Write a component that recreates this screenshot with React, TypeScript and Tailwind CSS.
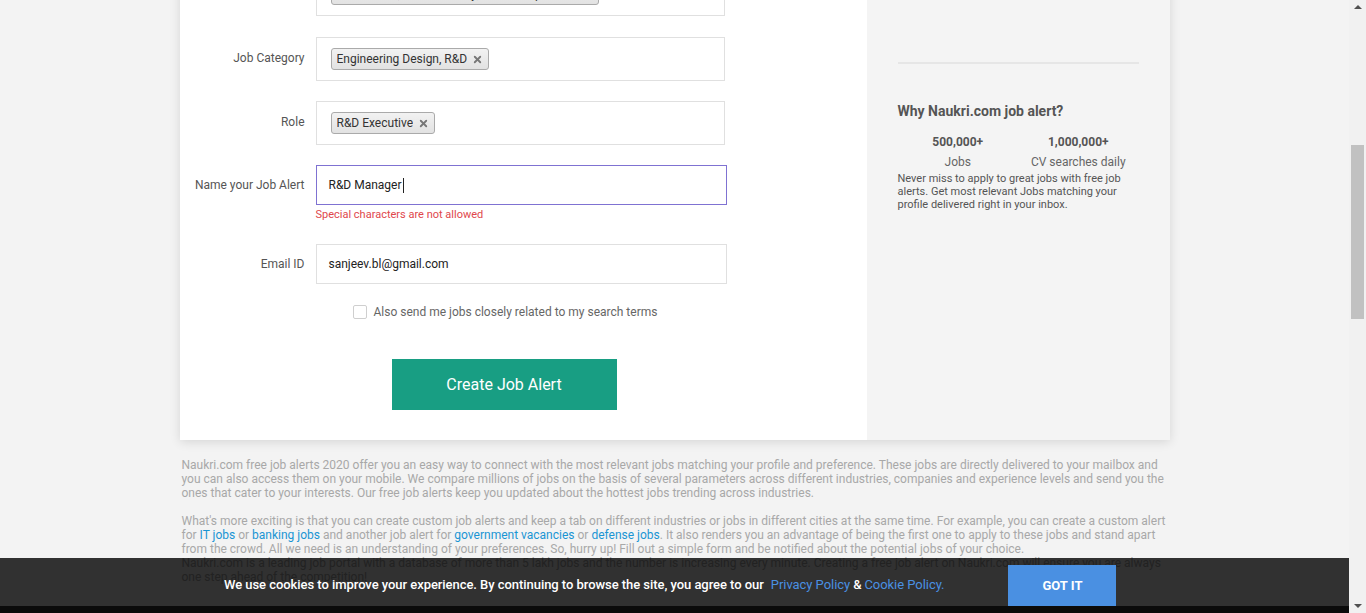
import { X } from 'lucide-react';

function Tag({ label, className = '' }: { label: string; className?: string }) {
  return (
    <span
      className={`inline-flex items-center h-[22px] px-[5px] gap-[5px] rounded-[3px] border border-[#aaaaaa] bg-gradient-to-b from-[#f2f2f2] to-[#e2e2e2] text-[12px] text-[#333] whitespace-nowrap overflow-hidden ${className}`}
    >
      <span className="truncate">{label}</span>
      <X size={11} strokeWidth={4} className="text-[#777] shrink-0" />
    </span>
  );
}

function Row({
  label,
  children,
  className = '',
  labelClass = '',
}: {
  label: string;
  children: React.ReactNode;
  className?: string;
  labelClass?: string;
}) {
  return (
    <div className={`flex items-center ${className}`}>
      <div className={`w-[136px] pr-[11px] text-right text-[12px] text-[#555] shrink-0 ${labelClass}`}>{label}</div>
      {children}
    </div>
  );
}

export default function App() {
  return (
    <div className="h-screen w-full flex overflow-hidden bg-[#f3f3f3] font-['Roboto',sans-serif]">
      <div className="flex-1 relative overflow-hidden">
        <div className="-mt-[28px]">
          {/* main card */}
          <div className="mx-auto w-[990px] flex shadow-[0_2px_10px_rgba(0,0,0,0.12)]">
            <div className="w-[687px] bg-white pb-[30px]">
              <Row label="">
                <div className="w-[409px] h-[44px] border border-[#e0e0e0] px-[14px] flex items-center">
                  <Tag label="Automobile, Auto Ancillary, Auto Components" className="w-[268px]" />
                </div>
              </Row>
              <Row label="Job Category" className="mt-[21px]" labelClass="pb-[3px]">
                <div className="w-[409px] h-[44px] border border-[#e0e0e0] px-[14px] flex items-center">
                  <Tag label="Engineering Design, R&D" />
                </div>
              </Row>
              <Row label="Role" className="mt-[20px]" labelClass="pb-[2px]">
                <div className="w-[409px] h-[44px] border border-[#e0e0e0] px-[14px] flex items-center">
                  <Tag label="R&D Executive" />
                </div>
              </Row>
              <Row label="Name your Job Alert" className="mt-[20px]">
                <div className="w-[411px] h-[40px] border border-[#7f72d2] flex items-center pl-[12px] text-[12px] text-[#222]">
                  R&amp;D Manager<span className="w-px h-[15px] bg-[#222] ml-px" />
                </div>
              </Row>
              <div className="pl-[136px] mt-[3px] text-[11px] leading-[13px] text-[#e0474c]">Special characters are not allowed</div>
              <Row label="Email ID" className="mt-[23px]">
                <div className="w-[411px] h-[40px] border border-[#e0e0e0] flex items-center pl-[12px] text-[12px] text-[#222]">
                  sanjeev.bl@gmail.com
                </div>
              </Row>
              <div className="flex items-center pl-[173px] mt-[19px]">
                <span className="w-[14px] h-[14px] border border-[#cfcfcf] rounded-[2px] bg-white" />
                <span className="ml-[7px] text-[12px] text-[#666]">Also send me jobs closely related to my search terms</span>
              </div>
              <div className="pl-[212px] mt-[38px]">
                <button className="w-[225px] h-[51px] bg-[#189e83] text-white text-[16px] font-normal">Create Job Alert</button>
              </div>
            </div>
            <div className="flex-1 bg-[#f4f4f4] px-[31px] pt-[90px]">
              <div className="h-[2px] bg-[#e6e6e6]" />
              <h3 className="mt-[39px] text-[14px] leading-[17px] font-bold text-[#555]">Why Naukri.com job alert?</h3>
              <div className="mt-[15px] grid grid-cols-2 text-center text-[12px] text-[#666]">
                <div>
                  <div className="font-bold text-[#555] leading-[14px]">500,000+</div>
                  <div className="mt-[6px] leading-[14px]">Jobs</div>
                </div>
                <div>
                  <div className="font-bold text-[#555] leading-[14px]">1,000,000+</div>
                  <div className="mt-[6px] leading-[14px]">CV searches daily</div>
                </div>
              </div>
              <p className="mt-[3px] text-[11px] leading-[13px] text-[#555]">
                Never miss to apply to great jobs with free job alerts. Get most relevant Jobs matching your profile delivered right in your inbox.
              </p>
            </div>
          </div>

          {/* seo text */}
          <div className="mx-auto w-[990px] px-[2px] mt-[18px] text-[12px] leading-[14px] text-[#a8a8a8]">
            <p>
              Naukri.com free job alerts 2020 offer you an easy way to connect with the most relevant jobs matching your profile and preference. These jobs are directly delivered to your mailbox and you can also access them on your mobile. We compare millions of jobs on the basis of several parameters across different industries, companies and experience levels and send you the ones that cater to your interests. Our free job alerts keep you updated about the hottest jobs trending across industries.
            </p>
            <p className="mt-[14px]">
              What's more exciting is that you can create custom job alerts and keep a tab on different industries or jobs in different cities at the same time. For example, you can create a custom alert for <a className="text-[#1a95d3]">IT jobs</a> or <a className="text-[#1a95d3]">banking jobs</a> and another job alert for <a className="text-[#1a95d3]">government vacancies</a> or <a className="text-[#1a95d3]">defense jobs</a>. It also renders you an advantage of being the first one to apply to these jobs and stand apart from the crowd. All we need is an understanding of your preferences. So, hurry up! Fill out a simple form and be notified about the potential jobs of your choice.
            </p>
            <p>
              Naukri.com is a leading job portal with a database of more than 5 lakh jobs and the number is increasing every minute. Creating a free job alert on Naukri.com will ensure you are always one step ahead of the competition!
            </p>
          </div>
        </div>

        {/* cookie banner */}
        <div className="absolute left-0 right-0 bottom-0">
          <div className="h-[48px] bg-[rgba(0,0,0,0.8)] flex items-end">
            <div className="flex items-center h-[48px] pt-[5px] pl-[224px] text-[13px] font-medium tracking-[-0.05px] text-white">
              We use cookies to improve your experience. By continuing to browse the site, you agree to our
              <a className="ml-[7px] text-[#4a90e2] font-normal">Privacy Policy</a>
              <span className="mx-[3px]">&amp;</span>
              <a className="text-[#4a90e2] font-normal">Cookie Policy.</a>
            </div>
            <button className="ml-[64px] w-[108px] h-[41px] bg-[#4a90e2] text-white text-[13px] font-bold">GOT IT</button>
          </div>
          <div className="h-[7px] bg-[#0b0b0b]" />
        </div>
      </div>

      {/* scrollbar */}
      <div className="w-[17px] bg-[#f1f1f1] flex flex-col items-center">
        <div className="h-[14px] flex items-center justify-center">
          <span className="w-0 h-0 border-l-[4px] border-r-[4px] border-b-[4px] border-l-transparent border-r-transparent border-b-[#505050]" />
        </div>
        <div className="mt-[131px] w-[13px] h-[174px] bg-[#c1c1c1]" />
        <div className="flex-1" />
        <div className="h-[14px] flex items-center justify-center">
          <span className="w-0 h-0 border-l-[4px] border-r-[4px] border-t-[4px] border-l-transparent border-r-transparent border-t-[#505050]" />
        </div>
      </div>
    </div>
  );
}
